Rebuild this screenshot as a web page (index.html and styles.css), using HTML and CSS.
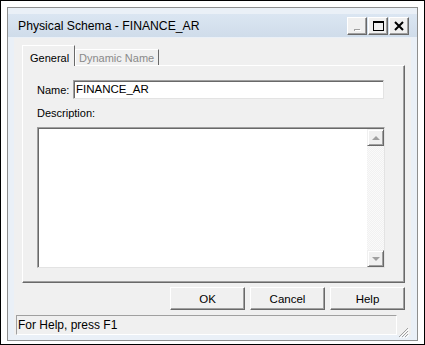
FILE: index.html
```html
<!DOCTYPE html>
<html lang="en">

<head>
    <meta charset="UTF-8">
    <title>Physical Schema - FINANCE_AR</title>
    <link rel="stylesheet" href="styles.css">
</head>

<body>
    <div class="screen">
        <div class="window">
            <!-- Barra de titulo -->
            <div class="titlebar">
                <span class="title">Physical Schema - FINANCE_AR</span>
                <div class="caption-buttons">
                    <span class="cap-btn">
                        <svg width="18" height="16" viewBox="0 0 18 16">
                            <rect x="6" y="11" width="6" height="2" fill="#a0a0a0" />
                            <rect x="7" y="12" width="6" height="1" fill="#ffffff" />
                        </svg>
                    </span>
                    <span class="cap-btn">
                        <svg width="18" height="16" viewBox="0 0 18 16">
                            <rect x="4.5" y="3.5" width="10" height="9" fill="none" stroke="#000" />
                            <rect x="4" y="3" width="11" height="2" fill="#000" />
                        </svg>
                    </span>
                    <span class="cap-btn">
                        <svg width="18" height="16" viewBox="0 0 18 16">
                            <path d="M5 4 L13 12 M13 4 L5 12" stroke="#000" stroke-width="2" />
                        </svg>
                    </span>
                </div>
            </div>

            <div class="dialog-body">
                <!-- Abas -->
                <div class="tabs">
                    <div class="tab active">General</div>
                    <div class="tab">Dynamic Name</div>
                </div>

                <div class="panel">
                    <div class="field-row">
                        <label for="name" class="field-label">Name:</label>
                        <div class="input" id="name">FINANCE_AR</div>
                    </div>

                    <label class="desc-label">Description:</label>
                    <div class="textarea">
                        <div class="scrollbar">
                            <span class="arrow-btn"><span class="tri up"></span></span>
                            <span class="track"></span>
                            <span class="arrow-btn"><span class="tri down"></span></span>
                        </div>
                    </div>
                </div>

                <!-- Botoes -->
                <div class="buttons">
                    <button class="btn">OK</button>
                    <button class="btn">Cancel</button>
                    <button class="btn">Help</button>
                </div>

                <!-- Barra de status -->
                <div class="status-row">
                    <div class="status">For Help, press F1</div>
                    <svg class="grip" width="12" height="12" viewBox="0 0 12 12">
                        <path d="M11 2 L2 11 M11 5 L5 11 M11 8 L8 11" stroke="#a0a0a0" stroke-width="1" />
                        <path d="M12 3 L3 12 M12 6 L6 12 M12 9 L9 12" stroke="#ffffff" stroke-width="1" />
                    </svg>
                </div>
            </div>
        </div>
    </div>
</body>

</html>
```

FILE: styles.css
```css
body {
    margin: 0;
    font-family: "Liberation Sans", Arial, sans-serif;
    background-color: #ffffff;
}

.screen {
    width: 425px;
    height: 345px;
    box-sizing: border-box;
    border: 1px solid #000;
    padding: 6px;
    background-color: #ffffff;
}

.window {
    width: 411px;
    height: 334px;
    box-sizing: border-box;
    border: 1px solid #8e8f8f;
    background-color: #eaf0f7;
    padding-top: 6px;
    display: flex;
    flex-direction: column;
}

.titlebar {
    height: 23px;
    background: linear-gradient(#dbe6f2, #cfdcea);
    display: flex;
    align-items: center;
    padding: 0 8px 0 10px;
}

.title {
    font-size: 12.2px;
    color: #000;
    flex: 1;
}

.caption-buttons {
    display: flex;
    gap: 1px;
}

.cap-btn {
    width: 20px;
    height: 18px;
    box-sizing: border-box;
    background-color: #f0f0f0;
    border: 1px solid;
    border-color: #ffffff #696969 #696969 #ffffff;
    box-shadow: inset -1px -1px 0 #a0a0a0;
    display: flex;
    align-items: center;
    justify-content: center;
}

.dialog-body {
    margin: 1px 6px 0 6px;
    height: 297px;
    background-color: #f0f0f0;
    font-size: 11px;
    display: flex;
    flex-direction: column;
}

.tabs {
    display: flex;
    align-items: flex-end;
    margin: 7px 0 0 8px;
    height: 20px;
    position: relative;
    z-index: 1;
}

.tab {
    height: 16px;
    box-sizing: border-box;
    padding: 1px 4px 0 3px;
    border: 1px solid;
    border-bottom: none;
    border-color: #ffffff #696969 transparent #ffffff;
    color: #8a8a8a;
    font-size: 11px;
    line-height: 14px;
}

.tab.active {
    height: 21px;
    margin-bottom: -1px;
    background-color: #f0f0f0;
    color: #000;
    padding: 5px 0 0 7px;
    width: 53px;
}

.panel {
    margin-left: 8px;
    width: 383px;
    height: 219px;
    box-sizing: border-box;
    border: 1px solid;
    border-color: #ffffff #696969 #696969 #ffffff;
    box-shadow: inset -1px -1px 0 #a0a0a0;
    padding: 14px 0 0 14px;
}

.field-row {
    display: flex;
    align-items: center;
}

.field-label {
    width: 36px;
    font-size: 11px;
}

.input {
    width: 311px;
    height: 19px;
    box-sizing: border-box;
    background-color: #ffffff;
    border: 1px solid;
    border-color: #a0a0a0 #e3e3e3 #e3e3e3 #a0a0a0;
    box-shadow: inset 1px 1px 0 #696969;
    padding: 2px 0 0 2px;
    font-size: 11.5px;
}

.desc-label {
    display: block;
    margin-top: 8px;
    height: 20px;
}

.textarea {
    width: 348px;
    height: 141px;
    box-sizing: border-box;
    background-color: #ffffff;
    border: 1px solid;
    border-color: #a0a0a0 #e3e3e3 #e3e3e3 #a0a0a0;
    box-shadow: inset 1px 1px 0 #696969;
    display: flex;
    justify-content: flex-end;
    padding: 1px 0 0 1px;
}

.scrollbar {
    width: 17px;
    display: flex;
    flex-direction: column;
    background-color: #f7f7f7;
    background-image: repeating-conic-gradient(#f1f1f1 0 25%, #fafafa 0 50%);
    background-size: 2px 2px;
}

.track {
    flex: 1;
}

.arrow-btn {
    width: 17px;
    height: 17px;
    box-sizing: border-box;
    background-color: #f0f0f0;
    border: 1px solid;
    border-color: #f0f0f0 #696969 #696969 #f0f0f0;
    box-shadow: inset 1px 1px 0 #ffffff, inset -1px -1px 0 #a0a0a0;
    display: flex;
    align-items: center;
    justify-content: center;
}

.tri {
    width: 0;
    height: 0;
    border-left: 4px solid transparent;
    border-right: 4px solid transparent;
}

.tri.up {
    border-bottom: 4px solid #a0a0a0;
}

.tri.down {
    border-top: 4px solid #a0a0a0;
}

.buttons {
    display: flex;
    justify-content: flex-end;
    gap: 5px;
    margin-top: 4px;
    padding-right: 6px;
}

.btn {
    width: 75px;
    height: 23px;
    box-sizing: border-box;
    font-family: "Liberation Sans", Arial, sans-serif;
    font-size: 11.5px;
    color: #000;
    background-color: #f0f0f0;
    border: 1px solid;
    border-color: #ffffff #696969 #696969 #ffffff;
    box-shadow: inset -1px -1px 0 #a0a0a0;
    padding: 0;
}

.status-row {
    display: flex;
    align-items: flex-end;
    margin: 5px 0 0 2px;
}

.status {
    width: 381px;
    height: 20px;
    box-sizing: border-box;
    border: 1px solid;
    border-color: #a0a0a0 #ffffff #ffffff #a0a0a0;
    padding: 2px 0 0 1px;
    font-size: 12px;
}

.grip {
    margin-bottom: -3px;
}
```
